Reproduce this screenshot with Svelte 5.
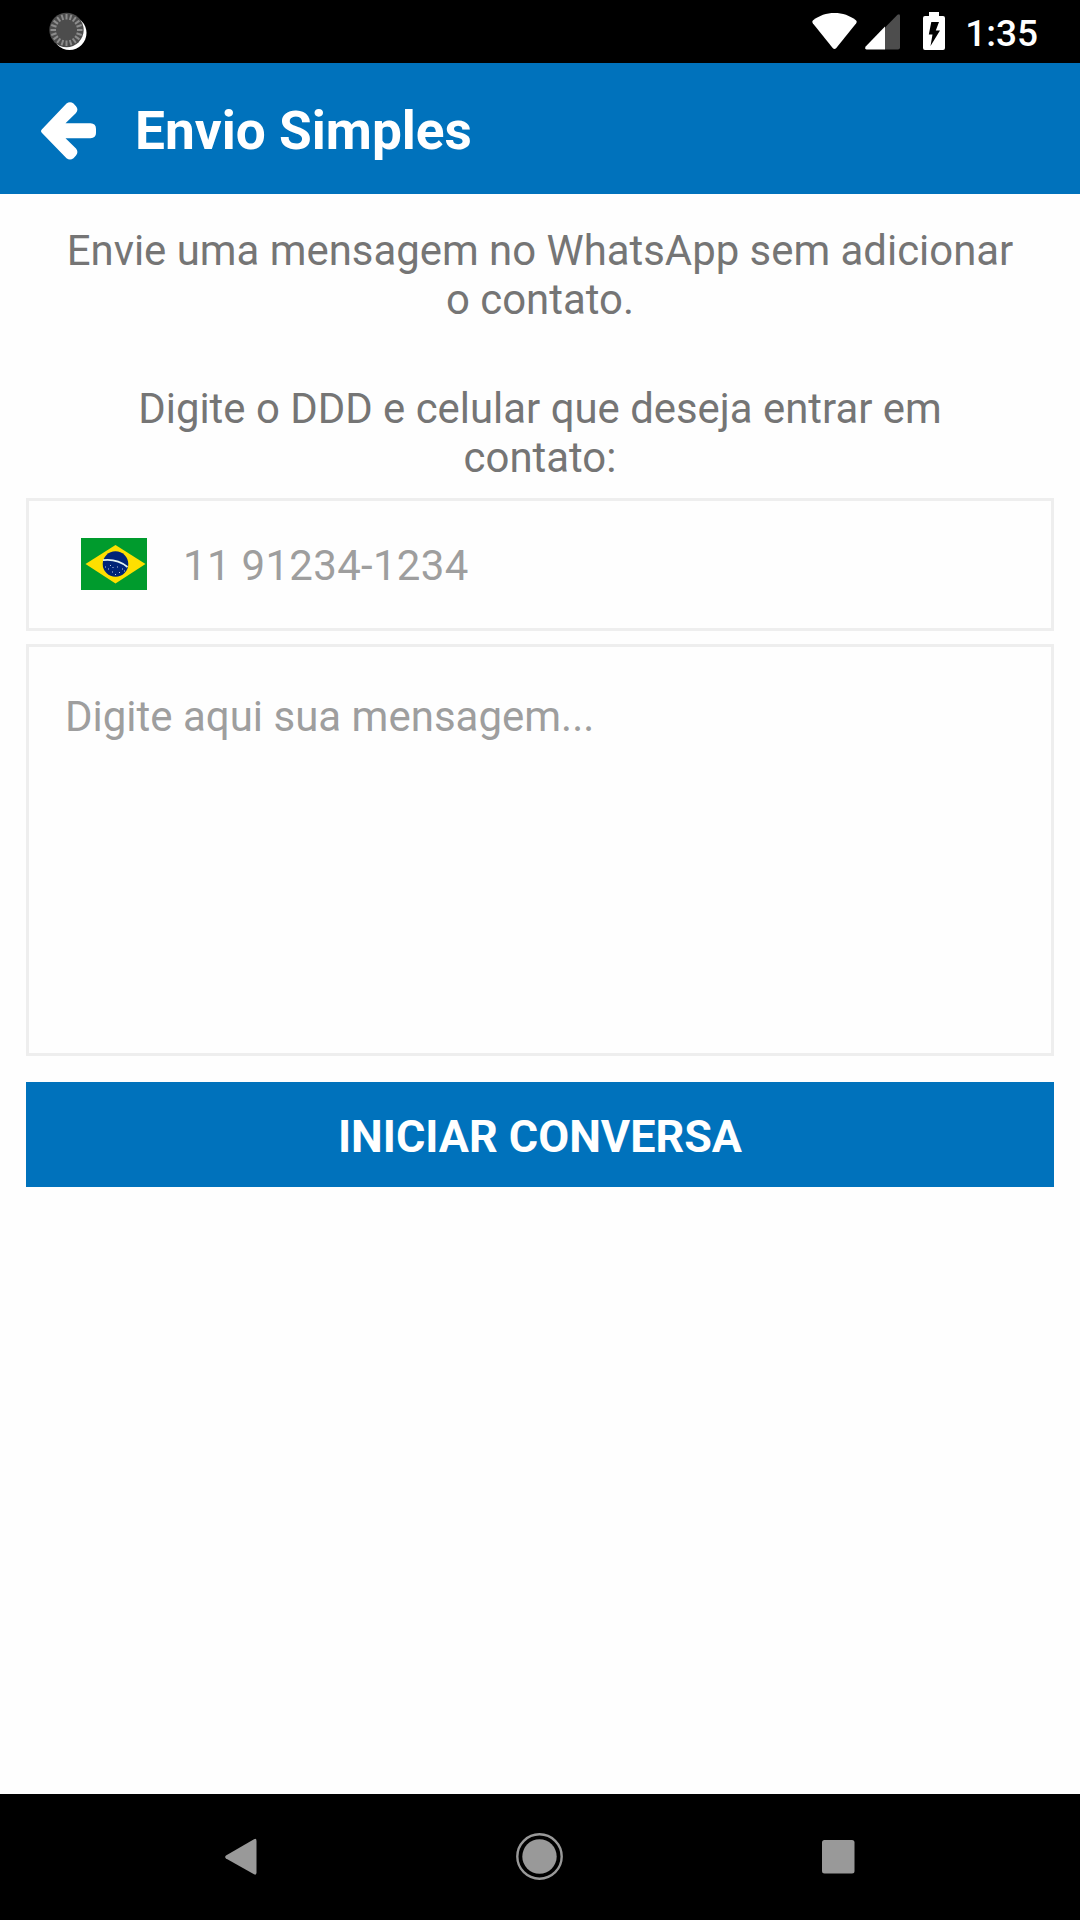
<script lang="ts">
  let phone: string = '';
  let message: string = '';

  // Tick marks of the loading indicator in the status bar
  const ticks = Array.from({ length: 20 }, (_, i) => i * 18);
</script>

<div class="screen">
  <div class="status-bar">
    <svg width="42" height="42" viewBox="0 0 42 42">
      <circle cx="23.5" cy="23" r="17" fill="#fff" />
      <circle cx="20.5" cy="20" r="17.2" fill="#4c4c4c" />
      {#each ticks as angle}
        <line x1="20.5" y1="4" x2="20.5" y2="9.5" transform="rotate({angle} 20.5 20)" stroke="#8c8c8c" stroke-width="2" />
      {/each}
    </svg>

    <div class="status-right">
      <svg width="45" height="37" viewBox="0 0 45 37">
        <path d="M1.1 7.2C7 2.6 14.5 0 22.5 0S38 2.6 43.9 7.2Q45.3 8.6 44.2 10.2L24.3 35Q22.5 37 20.7 35L.8 10.2Q-.3 8.6 1.1 7.2Z" fill="#fff" />
      </svg>
      <svg class="signal" width="35" height="36" viewBox="0 0 35 36">
        <path d="M20 13.5 32.5.8Q35-.8 35 2V33.5Q35 35.5 33 35.5H20Z" fill="#4d4d4d" />
        <path d="M20 12.5V35.5H1.5Q-.8 35 .7 32.5Z" fill="#fff" />
      </svg>
      <svg class="battery" width="22" height="38" viewBox="0 0 22 38">
        <path d="M6 0H16V4H20Q22 4 22 6V36Q22 38 20 38H2Q0 38 0 36V6Q0 4 2 4H6Z" fill="#fff" />
        <path d="M8.3 10H16L12.8 18.5H17L7.5 34 9.5 22.5H5.8Z" fill="#000" />
      </svg>
      <span class="clock">1:35</span>
    </div>
  </div>

  <header class="toolbar">
    <button class="back" aria-label="Voltar">
      <svg width="56" height="60" viewBox="0 0 56 60">
        <path d="M1 28.2 25.5 2.5Q29 .2 32.500 2.5L35 5.2Q37.8 8.5 35 12L24.5 22.3H49.5Q55 22.5 55 28V32Q55 37 49.5 37.3H24.5L35 47.500Q37.8 51 35 54.5L32.5 57.2Q29 59.6 25.5 57.2L1 32Q-1 30 1 28.2Z" fill="#fff" />
      </svg>
    </button>
    <h1>Envio Simples</h1>
  </header>

  <main class="content">
    <p class="intro">Envie uma mensagem no WhatsApp sem adicionar o contato.</p>
    <p class="hint">Digite o DDD e celular que deseja entrar em contato:</p>

    <div class="phone-field">
      <svg width="66" height="52" viewBox="0 0 66 52">
        <rect width="66" height="52" fill="#009b2d" />
        <path d="M4.5 26 34.5 7 64.5 26 34.5 45.5Z" fill="#fedf00" />
        <circle cx="34.5" cy="26" r="12.8" fill="#002478" />
        <path d="M22 22.2Q36 20.5 46.5 29" fill="none" stroke="#e4f4f2" stroke-width="1.8" />
        <path d="M24 29h1M27 31h1M29 27.5h1M31 34h1M34 36.5h1M38 34.5h1M36 29h1M41 31h1M31.5 29.5h1M43 33h1" stroke="#b9c9e4" stroke-width="1" />
      </svg>
      <input type="tel" placeholder="11 91234-1234" bind:value={phone} />
    </div>

    <textarea class="message" placeholder="Digite aqui sua mensagem..." bind:value={message}></textarea>

    <button class="submit">INICIAR CONVERSA</button>
  </main>

  <nav class="nav-bar">
    <svg width="32" height="38" viewBox="0 0 32 38">
      <path d="M1 17.5 29 1.2Q31.5 0 31.5 3V34.5Q31.5 37.5 29 36.3L1 20.5Q-.7 19 1 17.5Z" fill="#999" />
    </svg>
    <svg width="48" height="48" viewBox="0 0 48 48">
      <circle cx="23.5" cy="23.5" r="22.2" fill="none" stroke="#999" stroke-width="2.4" />
      <circle cx="23.5" cy="23.5" r="17.2" fill="#999" />
    </svg>
    <svg width="33" height="34" viewBox="0 0 33 34">
      <rect width="32.5" height="33.5" rx="2.5" fill="#999" />
    </svg>
  </nav>
</div>

<style>
  :global(body) {
    margin: 0;
    background-color: #fff;
  }

  .screen {
    display: flex;
    flex-direction: column;
    width: 1080px;
    height: 1920px;
    background-color: #fefefe;
    font-family: Roboto, sans-serif;
    overflow: hidden;
  }

  svg {
    display: block;
    flex-shrink: 0;
  }

  .status-bar {
    display: flex;
    justify-content: space-between;
    align-items: flex-start;
    flex-shrink: 0;
    box-sizing: border-box;
    height: 63px;
    padding: 10px 42px 0 46px;
    background-color: #000;
  }

  .status-right {
    display: flex;
    align-items: flex-end;
    height: 40px;
  }

  .signal {
    margin-left: 8px;
  }

  .battery {
    margin-left: 23px;
  }

  .clock {
    margin: 0 0 -5px 20px;
    color: #fff;
    font-size: 37px;
    font-weight: 500;
    line-height: 43px;
  }

  .toolbar {
    display: flex;
    align-items: center;
    flex-shrink: 0;
    height: 131px;
    padding-left: 41px;
    background-color: #0072bc;
  }

  .back {
    padding: 4px 0 0;
    border: none;
    background: none;
  }

  h1 {
    margin: 5px 0 0 38px;
    color: #fff;
    font-size: 53.2px;
    font-weight: 700;
    line-height: 62px;
  }

  .content {
    display: flex;
    flex-direction: column;
    flex: 1;
    padding: 32px 26px 0;
  }

  .intro,
  .hint {
    margin: 0 37px;
    color: #757575;
    font-size: 41.9px;
    line-height: 49px;
    text-align: center;
  }

  .hint {
    margin-top: 60px;
  }

  .phone-field {
    display: flex;
    align-items: center;
    box-sizing: border-box;
    height: 133px;
    margin-top: 16px;
    padding: 0 0 2px 52px;
    border: 3px solid #eee;
  }

  input,
  textarea {
    border: none;
    outline: none;
    background: none;
    color: #333;
    font-family: inherit;
    font-size: 42px;
    line-height: 49px;
  }

  input::placeholder,
  textarea::placeholder {
    color: #9e9e9e;
    opacity: 1;
  }

  input {
    flex: 1;
    height: 49px;
    margin-left: 36px;
    padding: 4px 0 0;
    letter-spacing: 0.3px;
  }

  .message {
    box-sizing: border-box;
    height: 412px;
    margin-top: 13px;
    padding: 45px 36px;
    border: 3px solid #eee;
    resize: none;
  }

  .submit {
    height: 105px;
    margin-top: 26px;
    padding: 4px 0 0;
    border: none;
    background-color: #0072bc;
    color: #fff;
    font-family: inherit;
    font-size: 44.9px;
    font-weight: 700;
  }

  .nav-bar {
    display: flex;
    justify-content: space-between;
    align-items: center;
    flex-shrink: 0;
    box-sizing: border-box;
    height: 126px;
    padding: 0 225px;
    background-color: #000;
  }
</style>
